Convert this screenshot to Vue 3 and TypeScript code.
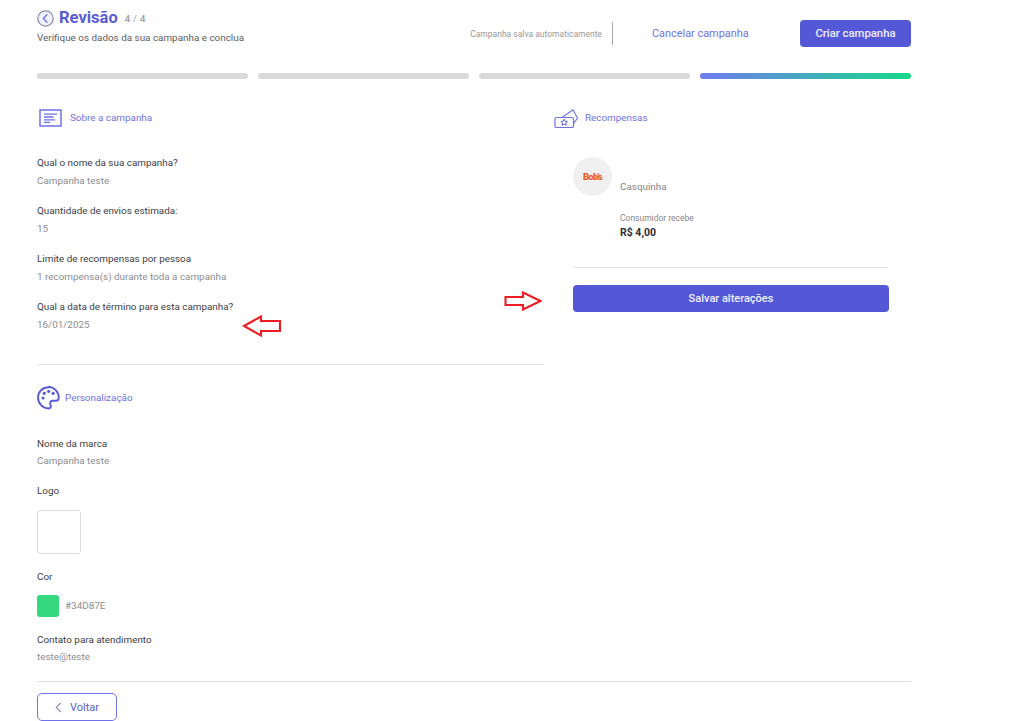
<script setup lang="ts">
const steps = [false, false, false, true]
const fields = [
  { label: 'Qual o nome da sua campanha?', value: 'Campanha teste' },
  { label: 'Quantidade de envios estimada:', value: '15' },
  { label: 'Limite de recompensas por pessoa', value: '1 recompensa(s) durante toda a campanha' },
  { label: 'Qual a data de término para esta campanha?', value: '16/01/2025' },
]
</script>

<template>
  <div class="page">
    <header class="top">
      <div class="intro">
        <div class="title-row">
          <svg class="back" width="17" height="17" viewBox="0 0 17 17" fill="none">
            <circle cx="8.500" cy="8.500" r="7.700" fill="#eef0fa" stroke="#8b8da8" stroke-width="1.200" />
            <path d="M10 4.800 6.300 8.500l3.700 3.700" stroke="#6f72e8" stroke-width="1.300" stroke-linecap="round" stroke-linejoin="round" />
          </svg>
          <h1>Revisão</h1>
          <span class="count">4 <i>/</i> 4</span>
        </div>
        <p class="sub">Verifique os dados da sua campanha e conclua</p>
      </div>
      <div class="actions">
        <span class="saved">Campanha salva automaticamente</span>
        <span class="vline"></span>
        <span class="cancel">Cancelar campanha</span>
        <button class="primary create">Criar campanha</button>
      </div>
    </header>

    <div class="progress">
      <span v-for="(active, i) in steps" :key="i" :class="{ active }"></span>
    </div>

    <main class="columns">
      <section class="left">
        <div class="heading">
          <svg width="23" height="18" viewBox="0 0 23 18" fill="none">
            <rect x="1" y="1" width="21" height="16" stroke="#6f72e8" stroke-width="1.500" />
            <path d="M5 5.200h13M5 8h9.500M5 10.800h11M5 13.400h6" stroke="#6f72e8" stroke-width="1.300" />
          </svg>
          <span>Sobre a campanha</span>
        </div>
        <div class="fields">
          <div v-for="f in fields" :key="f.label" class="field">
            <div class="label">{{ f.label }}</div>
            <div class="value">{{ f.value }}</div>
          </div>
        </div>
        <hr class="rule one" />
        <div class="heading second">
          <svg width="23" height="24" viewBox="0 0 23 24" fill="none">
            <path d="M11.500 1.200C5.600 1.200 1 5.800 1 11.600c0 5.800 4.700 10.900 10.300 10.900 2 0 2.800-1.300 2.500-2.800-.3-1.400-.9-2.100-.6-3.200.3-1.100 1.300-1.700 2.600-1.700h3.100c1.900 0 2.900-1.400 2.900-3.300 0-5.400-4.700-10.700-10.300-10.700Z" stroke="#5a5cd6" stroke-width="1.900" />
            <circle cx="6" cy="12" r="1.600" fill="#5a5cd6" />
            <circle cx="7.300" cy="7.300" r="1.600" fill="#5a5cd6" />
            <circle cx="11.700" cy="5.300" r="1.600" fill="#5a5cd6" />
            <circle cx="16.200" cy="7.300" r="1.600" fill="#5a5cd6" />
          </svg>
          <span>Personalização</span>
        </div>
        <div class="custom">
          <div class="label">Nome da marca</div>
          <div class="value">Campanha teste</div>
          <div class="label logo-label">Logo</div>
          <div class="logo-box"></div>
          <div class="label color-label">Cor</div>
          <div class="color-row">
            <span class="swatch"></span>
            <span class="hex">#34D87E</span>
          </div>
          <div class="label contact-label">Contato para atendimento</div>
          <div class="value">teste@teste</div>
        </div>
      </section>

      <section class="right">
        <div class="heading">
          <svg width="24" height="19" viewBox="0 0 24 19" fill="none" class="ticket">
            <rect x="1" y="8.500" width="18.500" height="10" rx="1.500" stroke="#6f72e8" stroke-width="1.200" />
            <path d="M8 8.500 19 .8l4.500 8.500-4 5" stroke="#6f72e8" stroke-width="1.100" stroke-linejoin="round" />
            <path d="m10.200 10.200 1 2 2.200.3-1.600 1.500.4 2.200-2-1-2 1 .4-2.200-1.600-1.500 2.200-.3Z" stroke="#5a5cd6" stroke-width="1" stroke-linejoin="round" />
          </svg>
          <span>Recompensas</span>
        </div>
        <div class="reward">
          <div class="brand-row">
            <div class="brand"><span>Bob's</span></div>
            <span class="product">Casquinha</span>
          </div>
          <div class="gets">Consumidor recebe</div>
          <div class="price">R$ 4,00</div>
          <hr class="rule two" />
          <button class="primary save">Salvar alterações</button>
        </div>
      </section>
    </main>

    <footer class="bottom">
      <button class="voltar">
        <svg width="7" height="11" viewBox="0 0 7 11" fill="none">
          <path d="M5.800 1 1.200 5.500l4.600 4.500" stroke="#8f91a8" stroke-width="1.100" />
        </svg>
        <span>Voltar</span>
      </button>
    </footer>

    <svg class="mark mark-left" width="40" height="22" viewBox="0 0 40 22" fill="none">
      <path d="M2 11 19 1.500V6h19v10H19v4.500Z" stroke="#ee1c25" stroke-width="2.100" />
    </svg>
    <svg class="mark mark-right" width="38" height="20" viewBox="0 0 38 20" fill="none">
      <path d="M36.500 10 19 1.500V6H1.500v8H19v4.500Z" stroke="#ee1c25" stroke-width="2.100" />
    </svg>
  </div>
</template>

<style>
html, body { margin: 0; background: #fff; }
</style>

<style scoped>
.page {
  position: relative;
  box-sizing: border-box;
  width: 1016px;
  height: 721px;
  overflow: hidden;
  padding: 9px 105px 0 37px;
  font-family: Roboto, "Liberation Sans", sans-serif;
  color: #3a3a42;
}
.top { display: flex; justify-content: space-between; height: 64px; }
.title-row { display: flex; align-items: center; height: 18px; }
.back { margin-right: 5px; }
h1 { margin: 0; font-size: 16.500px; line-height: 18px; font-weight: 700; color: #5a5cd6; }
.count { margin-left: 7px; font-size: 9.500px; font-weight: 500; color: #9a9a9f; letter-spacing: .3px; }
.count i { font-style: normal; font-weight: 400; }
.sub { margin: 3px 0 0; font-size: 9.900px; line-height: 15px; color: #5c5c62; }
.actions { display: flex; align-items: center; height: 27px; margin-top: 11px; }
.saved { font-size: 8.500px; color: #9a9a9a; }
.vline { width: 1px; height: 23px; margin-left: 10px; background: #a8a8a8; }
.cancel { margin-left: 39px; width: 148px; font-size: 10.900px; color: #6f72e8; }
.primary {
  border: 0;
  font-family: inherit;
  font-weight: 500;
  color: #eef0ff;
  background: #5558d6;
  border-radius: 4px;
}
.create { width: 111px; height: 27px; font-size: 11.300px; }
.progress { display: flex; gap: 10.500px; height: 6px; }
.progress span { flex: 1; border-radius: 3px; background: #d9d9d9; }
.progress span.active { background: linear-gradient(90deg, #6f7bf0, #18d98b); }
.columns { display: flex; margin-top: 30px; }
.left { width: 507px; margin-right: 10px; }
.right { flex: 1; }
.heading { display: flex; align-items: center; height: 18px; font-size: 9.900px; color: #6f72e8; }
.heading span { margin-bottom: 2px; }
.heading svg { margin: 0 8px 0 2px; flex: none; }
.heading.second { height: 24px; margin-top: 21px; }
.heading.second svg { margin: 0 5px 0 0; }
.heading .ticket { margin: 0 7px 0 0; }
.fields { margin-top: 29px; }
.field { height: 48px; }
.label { font-size: 9.900px; line-height: 13px; padding-bottom: 2px; color: #3d3d44; }
.value { margin-top: 3px; font-size: 9.900px; line-height: 13px; padding-bottom: 2px; color: #8d8d92; }
.rule { margin: 0; border: 0; height: 1px; background: #e2e2e2; }
.rule.one { margin-top: 16px; }
.custom { margin-top: 27px; }
.custom .value { margin-top: 2px; }
.logo-label { margin-top: 15px; }
.logo-box { box-sizing: border-box; width: 44px; height: 44px; margin-top: 11px; border: 1px solid #dcdcdc; border-radius: 3px; }
.color-label { margin-top: 16px; }
.color-row { display: flex; align-items: center; margin-top: 10px; }
.swatch { width: 22px; height: 22px; border-radius: 3px; background: #34d87e; }
.hex { margin-left: 6px; font-size: 9.900px; line-height: 13px; padding-bottom: 2px; color: #8d8d92; }
.contact-label { margin-top: 16px; }
.reward { margin: 30px 0 0 19px; width: 316px; }
.brand-row { display: flex; height: 39px; }
.brand { display: flex; align-items: center; justify-content: center; width: 39px; height: 39px; border-radius: 50%; background: #f0f0f0; }
.brand span { font-size: 9.500px; font-weight: 900; color: #ea5a24; letter-spacing: -.7px; }
.product { align-self: flex-end; margin: 0 0 2px 8px; font-size: 9.900px; line-height: 15px; color: #85858a; }
.gets { margin: 16px 0 0 47px; font-size: 8.500px; line-height: 12px; color: #85858a; }
.price { margin: 2px 0 0 47px; font-size: 10.500px; line-height: 14px; font-weight: 700; color: #2e2e33; }
.rule.two { margin-top: 27px; width: 315px; }
.save { display: block; width: 316px; height: 27px; margin-top: 17px; font-size: 11px; }
.bottom { position: absolute; left: 37px; top: 681px; width: 874px; border-top: 1px solid #e2e2e2; padding-top: 11px; }
.voltar {
  display: flex;
  align-items: center;
  justify-content: center;
  gap: 8px;
  box-sizing: border-box;
  width: 80px;
  height: 28px;
  padding: 0;
  background: #fff;
  border: 1px solid #6f72e8;
  border-radius: 5px;
  font-family: inherit;
  font-size: 11px;
  font-weight: 400;
  color: #5a5cd6;
}
.mark { position: absolute; }
.mark-left { left: 242px; top: 315px; }
.mark-right { left: 504px; top: 291px; }
</style>
